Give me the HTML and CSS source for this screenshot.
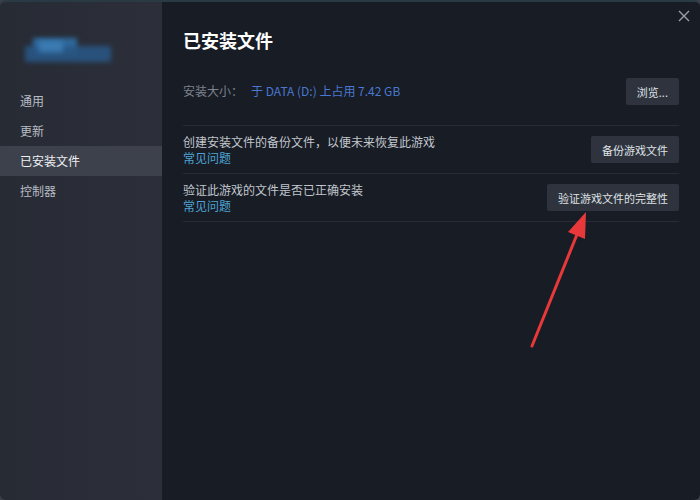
FILE: index.html
```html
<!DOCTYPE html>
<html lang="zh-CN">
<head>
<meta charset="utf-8" />
<title>已安装文件</title>
<link rel="stylesheet" href="styles.css">
</head>
<body>
<div class="window">
  <!-- ===== sidebar ===== -->
  <aside class="side">
    <div class="logo" aria-hidden="true">
      <span class="px a"></span><span class="px b"></span><span class="px c"></span>
    </div>
    <nav class="nav">
      <div class="item">通用</div>
      <div class="item">更新</div>
      <div class="item on">已安装文件</div>
      <div class="item">控制器</div>
    </nav>
  </aside>

  <!-- ===== main panel ===== -->
  <main class="main">
    <button class="close" aria-label="关闭">
      <svg width="12" height="12" viewBox="0 0 12 12"><path d="M1 1L11 11M11 1L1 11" stroke="#9aa0a8" stroke-width="1.4"/></svg>
    </button>
    <h1>已安装文件</h1>

    <div class="row first">
      <div class="info"><span class="lbl">安装大小：</span><span class="val">于 DATA (D:) 上占用 7.42 GB</span></div>
      <button class="btn">浏览...</button>
    </div>
    <div class="row">
      <div class="info">
        <div class="desc">创建安装文件的备份文件，以便未来恢复此游戏</div>
        <a class="link">常见问题</a>
      </div>
      <button class="btn">备份游戏文件</button>
    </div>
    <div class="row">
      <div class="info">
        <div class="desc">验证此游戏的文件是否已正确安装</div>
        <a class="link">常见问题</a>
      </div>
      <button class="btn">验证游戏文件的完整性</button>
    </div>

    <!-- annotation arrow drawn over the screenshot -->
    <svg class="arrow" width="80" height="140" viewBox="0 0 80 140" aria-hidden="true">
      <path d="M4 136 L50 22" stroke="#e8383a" stroke-width="3" stroke-linecap="round"/>
      <path d="M58 2 L40 22 L57 29 Z" fill="#e8383a"/>
    </svg>
  </main>
</div>
</body>
</html>
```

FILE: styles.css
```css
*{box-sizing:border-box}
html,body{margin:0;height:100%;background:#3a3f48}
body{font:400 12px/1.4 "Noto Sans CJK SC","Noto Sans",sans-serif;color:#c6cad0}

.window{
  display:flex; height:500px; width:700px;
  border-radius:6px; overflow:hidden;
  border-top:2px solid #2a3a44;
}

/* ===== sidebar ===== */
.side{width:162px;flex:none;background:linear-gradient(90deg,#272b34,#2c2f3a);padding-top:36px}
.logo{position:relative;height:26px;margin-left:25px;width:86px}
.logo .px{position:absolute;filter:blur(2.5px)}
.logo .a{left:8px;top:0;width:44px;height:16px;background:#2f6a9e}
.logo .b{left:0;top:8px;width:86px;height:16px;background:#285684;opacity:.9}
.logo .c{left:14px;top:3px;width:24px;height:11px;background:#3b7bb2}
.nav{margin-top:22px}
.item{height:30px;display:flex;align-items:center;padding-left:20px;color:#b8bcc4;font-size:12px}
.item.on{background:#3d414c;color:#eef0f3}

/* ===== main ===== */
.main{position:relative;flex:1;background:#171c25;padding:26px 21px 0 21px}
.close{position:absolute;right:8px;top:6px;background:none;border:0;padding:2px;cursor:pointer}
h1{margin:0 0 24px;font-size:18px;font-weight:700;color:#fff;line-height:24px}

.row{display:flex;align-items:center;justify-content:space-between;border-bottom:1px solid #262b35;padding:8px 0}
.row.first{padding:2px 0 20px}
.lbl{color:#7c838d}
.val{color:#4a78d0;margin-left:8px}
.desc{color:#c2c6cc;line-height:16px}
.link{display:block;color:#4ea3d4;line-height:15px}
.btn{
  height:27px;padding:0 11px;border:0;border-radius:2px;
  background:#2f333d;color:#dfe2e6;
  font:400 11px "Noto Sans CJK SC","Noto Sans",sans-serif;
}

.arrow{position:absolute;left:366px;top:208px}
```
